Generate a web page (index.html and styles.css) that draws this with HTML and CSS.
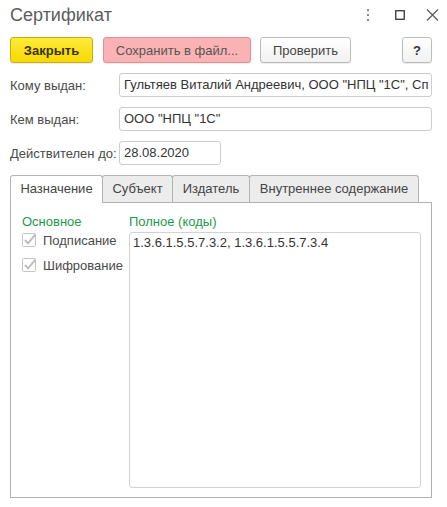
FILE: index.html
```html
<!DOCTYPE html>
<html lang="ru">
<head>
<meta charset="utf-8">
<title>Сертификат</title>
<link rel="stylesheet" href="styles.css">
</head>
<body>
<div class="window">
  <header class="titlebar">
    <div class="title">Сертификат</div>
    <div class="win-icons">
      <svg class="ico-dots" width="4" height="12" viewBox="0 0 4 12"><rect x="1" y="0" width="2" height="2" fill="#8a8a8a"/><rect x="1" y="5" width="2" height="2" fill="#8a8a8a"/><rect x="1" y="10" width="2" height="2" fill="#8a8a8a"/></svg>
      <svg class="ico-max" width="10" height="10" viewBox="0 0 10 10"><rect x="0.75" y="0.75" width="8.5" height="8.5" fill="none" stroke="#333" stroke-width="1.3"/></svg>
      <svg class="ico-close" width="13" height="12" viewBox="0 0 13 12"><path d="M1 0.5 L12 11.5 M12 0.5 L1 11.5" stroke="#555" stroke-width="1.1" fill="none"/></svg>
    </div>
  </header>
  <main class="content">
    <div class="toolbar">
      <button class="btn btn-primary">Закрыть</button>
      <button class="btn btn-save">Сохранить в файл...</button>
      <button class="btn btn-check">Проверить</button>
      <button class="btn btn-help">?</button>
    </div>
    <div class="form">
      <div class="row">
        <div class="label">Кому выдан:</div>
        <div class="field">Гультяев Виталий Андреевич, ООО "НПЦ "1С", Сп</div>
      </div>
      <div class="row">
        <div class="label">Кем выдан:</div>
        <div class="field">ООО "НПЦ "1С"</div>
      </div>
      <div class="row">
        <div class="label">Действителен до:</div>
        <div class="field field-date">28.08.2020</div>
      </div>
    </div>
    <div class="tabs">
      <div class="tab tab-active t1">Назначение</div>
      <div class="tab t2">Субъект</div>
      <div class="tab t3">Издатель</div>
      <div class="tab t4">Внутреннее содержание</div>
    </div>
    <div class="panel">
      <div class="group-title">Основное</div>
      <div class="group-title">Полное (коды)</div>
      <div class="checks">
        <div class="check-row">
          <svg class="checkbox" width="16" height="16" viewBox="0 0 16 16"><rect x="0.5" y="1.5" width="13" height="13" rx="1" fill="#fff" stroke="#c4c4c4"/><path d="M3 8 L6 11.3 L13.6 2.4" fill="none" stroke="#bdbdbd" stroke-width="2"/></svg>
          <span class="check-label">Подписание</span>
        </div>
        <div class="check-row">
          <svg class="checkbox" width="16" height="16" viewBox="0 0 16 16"><rect x="0.5" y="1.5" width="13" height="13" rx="1" fill="#fff" stroke="#c4c4c4"/><path d="M3 8 L6 11.3 L13.6 2.4" fill="none" stroke="#bdbdbd" stroke-width="2"/></svg>
          <span class="check-label">Шифрование</span>
        </div>
      </div>
      <div class="textarea">1.3.6.1.5.5.7.3.2, 1.3.6.1.5.5.7.3.4</div>
    </div>
  </main>
</div>
</body>
</html>
```
FILE: styles.css
```css
* { box-sizing: border-box; }
html, body {
  margin: 0;
  padding: 0;
  background: #fff;
}
body {
  font-family: "Liberation Sans", Arial, sans-serif;
  font-size: 13px;
  color: #333;
}
.window {
  width: 447px;
  height: 507px;
  overflow: hidden;
}
.titlebar {
  height: 30px;
  display: flex;
  align-items: center;
  justify-content: space-between;
  padding: 0 8px 0 10px;
}
.title {
  font-size: 18px;
  color: #5c5c5c;
  line-height: 30px;
}
.win-icons {
  display: flex;
  align-items: center;
  margin-top: -1px;
}
.ico-dots { display: block; margin-right: 25px; }
.ico-max { display: block; margin-right: 21px; }
.ico-close { display: block; }

.content {
  padding: 0 15px 0 10px;
}
.toolbar {
  margin-top: 7px;
  display: flex;
  height: 26px;
}
.btn {
  height: 26px;
  font-family: "Liberation Sans", Arial, sans-serif;
  font-size: 13px;
  border: 1px solid #bcbcbc;
  border-radius: 3px;
  padding: 0;
  background: linear-gradient(#ffffff, #f1f1f1);
  color: #444;
  box-shadow: 0 1px 1px rgba(0,0,0,0.08);
}
.btn-primary {
  width: 83px;
  font-weight: bold;
  color: #3a3300;
  background: linear-gradient(#ffeb3a, #f7d800);
  border-color: #c8ac12;
}
.btn-save {
  width: 148px;
  margin-left: 10px;
  color: #555;
  background: #fbb2b4;
  border-color: #e58f92;
}
.btn-check {
  width: 91px;
  margin-left: 9px;
}
.btn-help {
  width: 30px;
  margin-left: auto;
  font-weight: bold;
  color: #333;
}

.form {
  margin-top: 10px;
  display: flex;
  flex-direction: column;
  gap: 10px;
}
.row {
  display: flex;
  align-items: center;
  height: 24px;
}
.label {
  width: 109px;
  color: #4a4a4a;
  white-space: nowrap;
}
.field {
  flex: 1;
  height: 24px;
  line-height: 22px;
  border: 1px solid #cdcdcd;
  border-radius: 3px;
  padding: 0 4px;
  color: #333;
  white-space: nowrap;
  overflow: hidden;
}
.field-date {
  flex: none;
  width: 102px;
}

.tabs {
  margin-top: 10px;
  display: flex;
  align-items: flex-end;
  height: 27px;
}
.tab {
  height: 27px;
  line-height: 25px;
  text-align: center;
  border: 1px solid #b3b3b3;
  border-bottom: none;
  border-radius: 3px 3px 0 0;
  background: #ececec;
  color: #444;
  white-space: nowrap;
}
.tab + .tab { margin-left: -1px; }
.tab-active {
  background: #fff;
  height: 28px;
  margin-bottom: -1px;
  z-index: 1;
}
.t1 { width: 93px; }
.t2 { width: 71px; }
.t3 { width: 78px; }
.t4 { width: 170px; }

.panel {
  height: 296px;
  border: 1px solid #b0b0b0;
  padding: 11px 10px 9px 11px;
  display: grid;
  grid-template-columns: 107px 1fr;
  grid-template-rows: 16px 1fr;
  row-gap: 2px;
}
.group-title {
  color: #1e9a4c;
  line-height: 16px;
  white-space: nowrap;
}
.checks {
  display: flex;
  flex-direction: column;
  gap: 9px;
}
.check-row {
  display: flex;
  align-items: center;
  height: 16px;
}
.checkbox {
  display: block;
  flex: none;
  margin-right: 5px;
  margin-top: -1px;
}
.check-label {
  color: #4a4a4a;
  white-space: nowrap;
}
.textarea {
  border: 1px solid #d2d2d2;
  border-radius: 3px;
  padding: 2px 3px;
  line-height: 16px;
  color: #333;
}
```
